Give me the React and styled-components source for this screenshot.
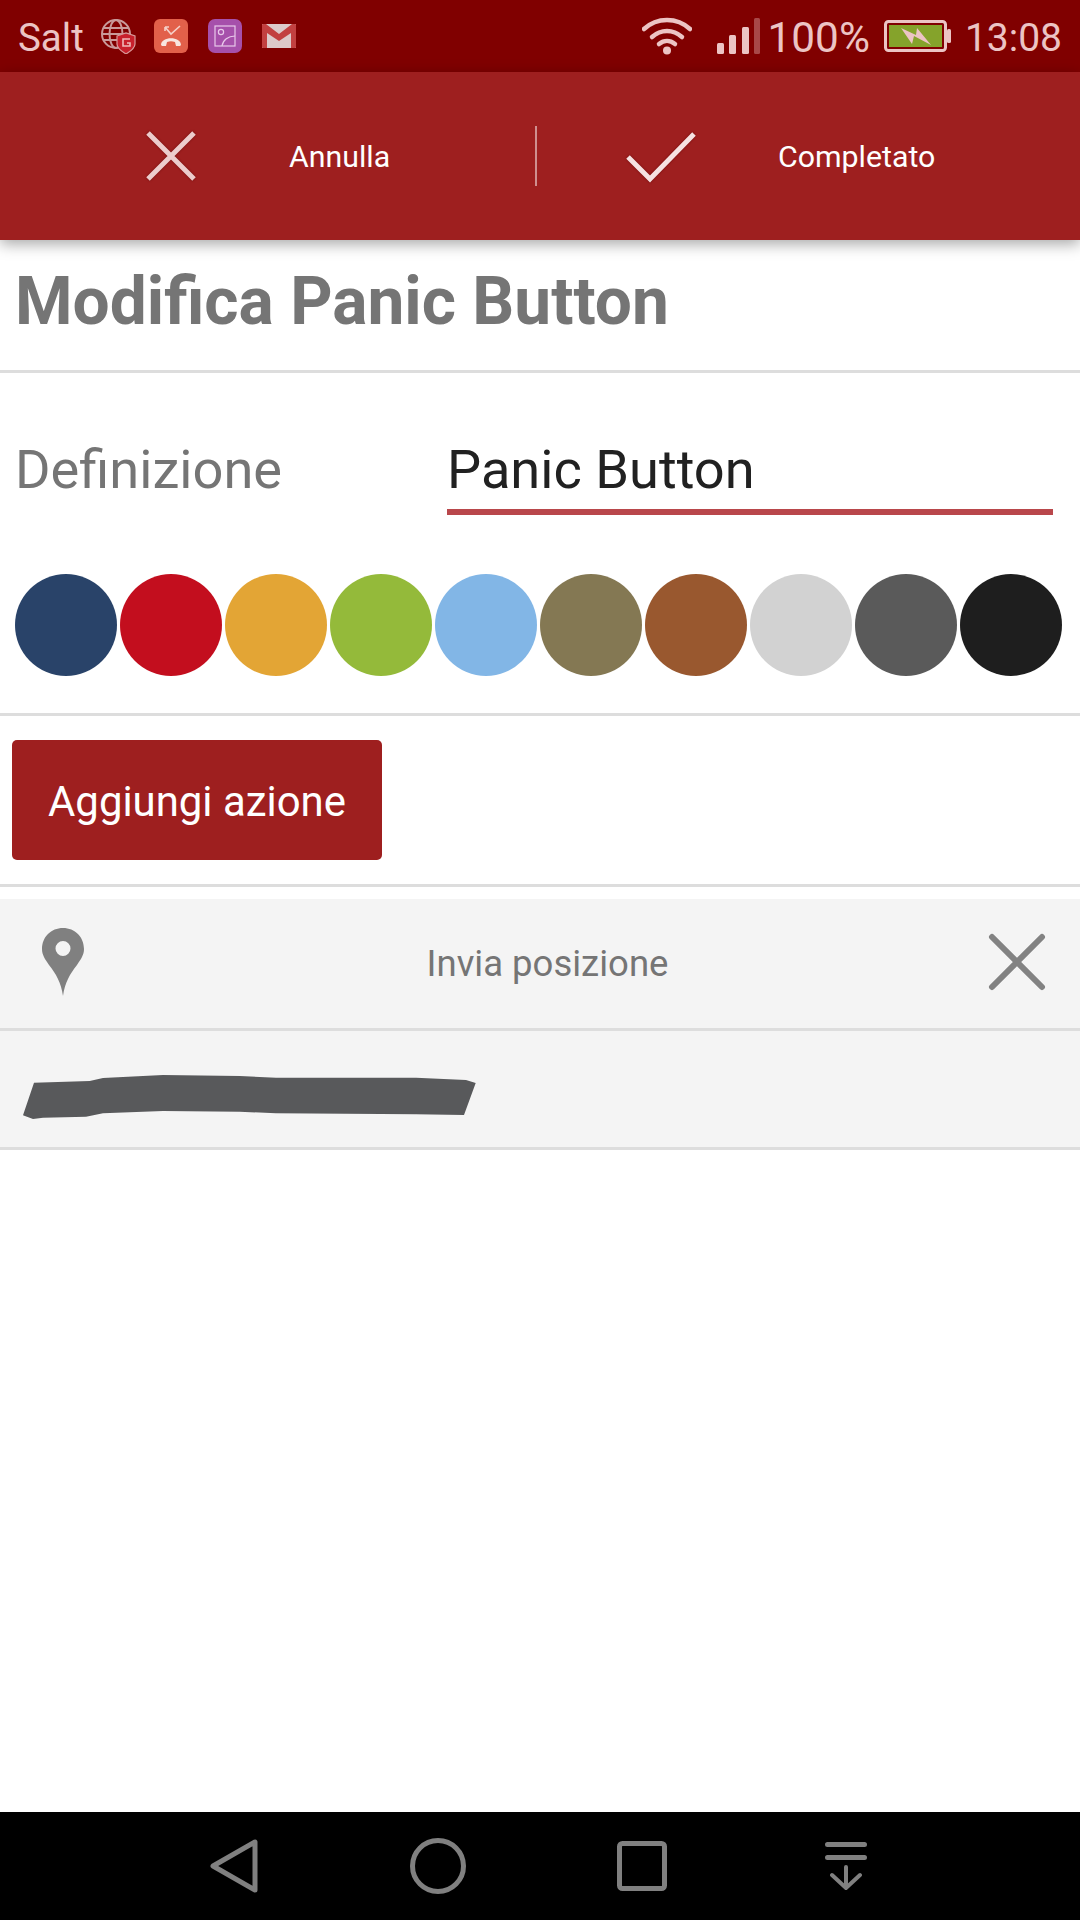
import React from 'react'
import styled, { createGlobalStyle } from 'styled-components'

const Global = createGlobalStyle`
html, body { margin: 0; padding: 0; background: #fff; }
body { font-family: Roboto, "Noto Sans", sans-serif; }
`
const Page = styled.div`
width: 1080px;
height: 1920px;
display: flex;
flex-direction: column;
overflow: hidden;
background: #fff;
`
const StatusBar = styled.div`
height: 72px;
flex: none;
background: #800000;
display: flex;
align-items: center;
padding: 0 18px 0 18px;
color: #ecc4c4;
box-sizing: border-box;
`
const StatusText = styled.span`
font-size: ${(props) => props.$size || 38.5}px;
line-height: 72px;
padding-top: 3px;
margin-left: ${(props) => props.$gap || 0}px;
`
const StatusIcon = styled.svg`
flex: none;
margin-left: ${(props) => props.$gap || 0}px;
`
const Spacer = styled.div`
flex: 1;
`
const ActionBar = styled.div`
height: 168px;
flex: none;
background: #9e1f1f;
display: flex;
position: relative;
z-index: 1;
box-shadow: 0 4px 14px rgba(0, 0, 0, 0.35);
`
const ActionHalf = styled.div`
width: ${(props) => props.$width}px;
height: 168px;
display: flex;
align-items: center;
flex: none;
padding-left: ${(props) => props.$pad}px;
box-sizing: border-box;
`
const ActionLabel = styled.span`
color: #fff;
font-size: 30.3px;
margin-left: ${(props) => props.$gap}px;
`
const ActionIcon = styled.svg`
flex: none;
filter: blur(0.5px) drop-shadow(0 0 1px rgba(90, 0, 0, 0.7));
`
const ActionDivider = styled.div`
width: 2px;
height: 60px;
margin-top: 54px;
flex: none;
background: #cf8f8f;
`
const Title = styled.h1`
margin: 0;
height: 133px;
box-sizing: border-box;
padding-left: 15px;
font-size: 65.8px;
line-height: 124px;
font-weight: 700;
color: #757575;
border-bottom: 3px solid #ddd;
`
const DefinitionRow = styled.div`
height: 201px;
display: flex;
padding: 61px 0 0 15px;
box-sizing: border-box;
`
const DefinitionLabel = styled.div`
width: 432px;
flex: none;
font-size: 54.2px;
line-height: 72px;
color: #757575;
`
const DefinitionInput = styled.div`
width: 606px;
height: 81px;
box-sizing: border-box;
flex: none;
font-size: 54.2px;
line-height: 72px;
color: #212121;
border-bottom: 6px solid #b9474b;
`
const Swatches = styled.div`
height: 142px;
display: flex;
align-items: flex-start;
gap: 3px;
padding: 0 15px;
box-sizing: border-box;
border-bottom: 3px solid #ddd;
`
const Swatch = styled.div`
width: 102px;
height: 102px;
flex: none;
border-radius: 50%;
background: ${(props) => props.$color};
`
const ButtonRow = styled.div`
height: 171px;
padding: 24px 0 0 12px;
box-sizing: border-box;
border-bottom: 3px solid #ddd;
`
const AddButton = styled.div`
width: 370px;
height: 120px;
border-radius: 5px;
background: #9e1f1f;
color: #fff;
font-size: 41.9px;
line-height: 124px;
text-align: center;
`
const ActionList = styled.div`
margin-top: 12px;
`
const LocationRow = styled.div`
height: 132px;
display: flex;
align-items: center;
position: relative;
background: #f4f4f4;
border-bottom: 3px solid #ddd;
box-sizing: border-box;
`
const LocationLabel = styled.div`
width: 100%;
padding-left: 15px;
text-align: center;
font-size: 36.500px;
color: #757575;
box-sizing: border-box;
`
const PinIcon = styled.svg`
position: absolute;
left: 42px;
top: 29px;
`
const RemoveIcon = styled.svg`
position: absolute;
left: 986px;
top: 32px;
filter: blur(0.4px);
`
const RedactedRow = styled.div`
height: 119px;
display: flex;
align-items: center;
background: #f4f4f4;
border-bottom: 3px solid #ddd;
box-sizing: border-box;
padding: 16px 0 0 23px;
`
const Content = styled.div`
flex: 1;
`
const NavBar = styled.div`
height: 108px;
flex: none;
background: #000;
display: flex;
align-items: center;
`
const NavIcon = styled.svg`
flex: none;
margin-left: ${(props) => props.$gap}px;
`

const swatches = ['#294369', '#c30e1e', '#e3a535', '#94ba3a', '#82b6e6', '#847853', '#99582f', '#d2d2d2', '#5a5a5a', '#1e1e1e']

const GlobeIcon = () => (
  <StatusIcon $gap={16} width="36" height="36" viewBox="0 0 36 36" fill="none">
    <g stroke="#c99a9a" strokeWidth="2">
      <circle cx="16" cy="16" r="14" />
      <ellipse cx="16" cy="16" rx="6.500" ry="14" />
      <path d="M3 10h26M2 16h28M3 22h26" />
    </g>
    <path d="M17 18l9-3 9 3v8c0 4-4 7-9 10-5-3-9-6-9-10z" fill="#c8202c" stroke="#d89a9a" strokeWidth="1.200" />
    <path d="M30 21h-7v7h7v-3h-3" fill="none" stroke="#eeb8b8" strokeWidth="1.600" />
  </StatusIcon>
)
const MissedCallIcon = () => (
  <StatusIcon $gap={18} width="34" height="34" viewBox="0 0 34 34" fill="none">
    <rect width="34" height="34" rx="6" fill="#e2604a" />
    <path d="M11 8l6 7 9-8M11 8v4M11 8h4" stroke="#f5d0c8" strokeWidth="1.600" />
    <path d="M7 26c0-9 20-9 20 0l-1 1h-4l-1-4c-3-1-5-1-8 0l-1 4H8z" fill="#f8e6e0" />
  </StatusIcon>
)
const GalleryIcon = () => (
  <StatusIcon $gap={20} width="34" height="34" viewBox="0 0 34 34" fill="none">
    <rect width="34" height="34" rx="7" fill="#a650ab" />
    <rect x="7" y="7" width="20" height="20" stroke="#e8c8ea" strokeWidth="1.200" />
    <circle cx="13" cy="13" r="2.600" stroke="#e8c8ea" strokeWidth="1.200" />
    <path d="M14 27c1-6 6-10 13-10" stroke="#e8c8ea" strokeWidth="1.200" />
  </StatusIcon>
)
const MailIcon = () => (
  <StatusIcon $gap={20} width="34" height="24" viewBox="0 0 34 24" fill="none">
    <rect width="34" height="24" rx="1" fill="#dccaca" />
    <path d="M0 1v22a1 1 0 0 0 1 1h4V9l12 8 12-8v15h4a1 1 0 0 0 1-1V1a1 1 0 0 0-1-1h-3L17 10 4 0H1a1 1 0 0 0-1 1z" fill="#c24040" />
  </StatusIcon>
)
const WifiIcon = () => (
  <StatusIcon width="50" height="38" viewBox="0 0 50 38" fill="none">
    <g stroke="#ecc4c4" strokeWidth="4.500" strokeLinecap="round">
      <path d="M2 12c13-12 33-12 46 0" />
      <path d="M10 20c9-8 21-8 30 0" />
      <path d="M17 27c5-4 11-4 16 0" />
    </g>
    <circle cx="25" cy="33.500" r="4" fill="#ecc4c4" />
  </StatusIcon>
)
const SignalIcon = () => (
  <StatusIcon $gap={25} width="43" height="36" viewBox="0 0 43 36" fill="none">
    <rect x="0" y="25" width="7" height="11" rx="1.500" fill="#ecc4c4" />
    <rect x="12" y="17" width="7" height="19" rx="1.500" fill="#ecc4c4" />
    <rect x="25" y="9" width="7" height="27" rx="1.500" fill="#ecc4c4" />
    <rect x="37" y="0" width="6" height="36" rx="1.500" fill="#a84848" />
  </StatusIcon>
)
const BatteryIcon = () => (
  <StatusIcon $gap={14} width="67" height="32" viewBox="0 0 67 32" fill="none">
    <rect x="1.500" y="1.500" width="60" height="29" rx="3" fill="#800000" stroke="#ecc4c4" strokeWidth="3" />
    <rect x="5" y="5" width="53" height="22" fill="#85a32b" />
    <rect x="63" y="9" width="4" height="14" rx="1.500" fill="#ecc4c4" />
    <path d="M17 8l15 7 1-7 14 17-17-9-2 8z" fill="#ecc4c4" />
  </StatusIcon>
)

const App = () => {
  return (
    <Page>
      <Global />
      <StatusBar>
        <StatusText>Salt</StatusText>
        <GlobeIcon />
        <MissedCallIcon />
        <GalleryIcon />
        <MailIcon />
        <Spacer />
        <WifiIcon />
        <SignalIcon />
        <StatusText $gap={8} $size={42.3}>100%</StatusText>
        <BatteryIcon />
        <StatusText $gap={14} $size={39}>13:08</StatusText>
      </StatusBar>
      <ActionBar>
        <ActionHalf $width={535} $pad={144}>
          <ActionIcon width="54" height="54" viewBox="0 0 54 54" fill="none">
            <path d="M4 4l46 46M50 4L4 50" stroke="#eccccc" strokeWidth="5" />
          </ActionIcon>
          <ActionLabel $gap={91}>Annulla</ActionLabel>
        </ActionHalf>
        <ActionDivider />
        <ActionHalf $width={543} $pad={89}>
          <ActionIcon width="70" height="54" viewBox="0 0 70 54" fill="none">
            <path d="M2 28l22 22L68 5" stroke="#f6e2e2" strokeWidth="5" />
          </ActionIcon>
          <ActionLabel $gap={82}>Completato</ActionLabel>
        </ActionHalf>
      </ActionBar>
      <Title>Modifica Panic Button</Title>
      <DefinitionRow>
        <DefinitionLabel>Definizione</DefinitionLabel>
        <DefinitionInput>Panic Button</DefinitionInput>
      </DefinitionRow>
      <Swatches>
        {swatches.map((color) => (
          <Swatch key={color} $color={color} />
        ))}
      </Swatches>
      <ButtonRow>
        <AddButton>Aggiungi azione</AddButton>
      </ButtonRow>
      <ActionList>
        <LocationRow>
          <PinIcon width="42" height="68" viewBox="0 0 42 68" fill="none">
            <path fillRule="evenodd" d="M21 0C9 0 0 9 0 21c0 6 3 10 7 16 7 9 12 17 14 31 2-14 7-22 14-31 4-6 7-10 7-16C42 9 33 0 21 0zm0 13a7.500 7.500 0 1 1 0 15 7.500 7.500 0 0 1 0-15z" fill="#808080" />
          </PinIcon>
          <LocationLabel>Invia posizione</LocationLabel>
          <RemoveIcon width="62" height="62" viewBox="0 0 62 62" fill="none">
            <path d="M6 6l50 50M56 6L6 56" stroke="#828282" strokeWidth="6" strokeLinecap="round" />
          </RemoveIcon>
        </LocationRow>
        <RedactedRow>
          <svg width="453" height="44" viewBox="0 0 453 44" fill="none">
            <path d="M11 7.700L66.700 6L80 3L140 0L216.700 1L253 2.700L393 2.700L443 5L452.700 8L441 40L393 39.300L253 38.300L216.700 36.700L140 36L80 38.300L63 41.700L20 42.700L10 44L0 40.300z" fill="#58595b" />
          </svg>
        </RedactedRow>
      </ActionList>
      <Content />
      <NavBar>
        <NavIcon $gap={210} width="48" height="54" viewBox="0 0 48 54" fill="none">
          <path d="M45 3v48L3 27z" stroke="#808080" strokeWidth="5" strokeLinejoin="round" />
        </NavIcon>
        <NavIcon $gap={152} width="56" height="56" viewBox="0 0 56 56" fill="none">
          <circle cx="28" cy="28" r="25.500" stroke="#808080" strokeWidth="5" />
        </NavIcon>
        <NavIcon $gap={151} width="50" height="50" viewBox="0 0 50 50" fill="none">
          <rect x="2.500" y="2.500" width="45" height="45" rx="3" stroke="#808080" strokeWidth="5" />
        </NavIcon>
        <NavIcon $gap={158} width="42" height="48" viewBox="0 0 42 48" fill="none">
          <path d="M2.500 2.500h37M2.500 15.500h37" stroke="#808080" strokeWidth="5" strokeLinecap="round" />
          <path d="M21 25v21M7 33l14 13 14-13" stroke="#808080" strokeWidth="4" strokeLinecap="round" />
        </NavIcon>
      </NavBar>
    </Page>
  )
}

export default App
